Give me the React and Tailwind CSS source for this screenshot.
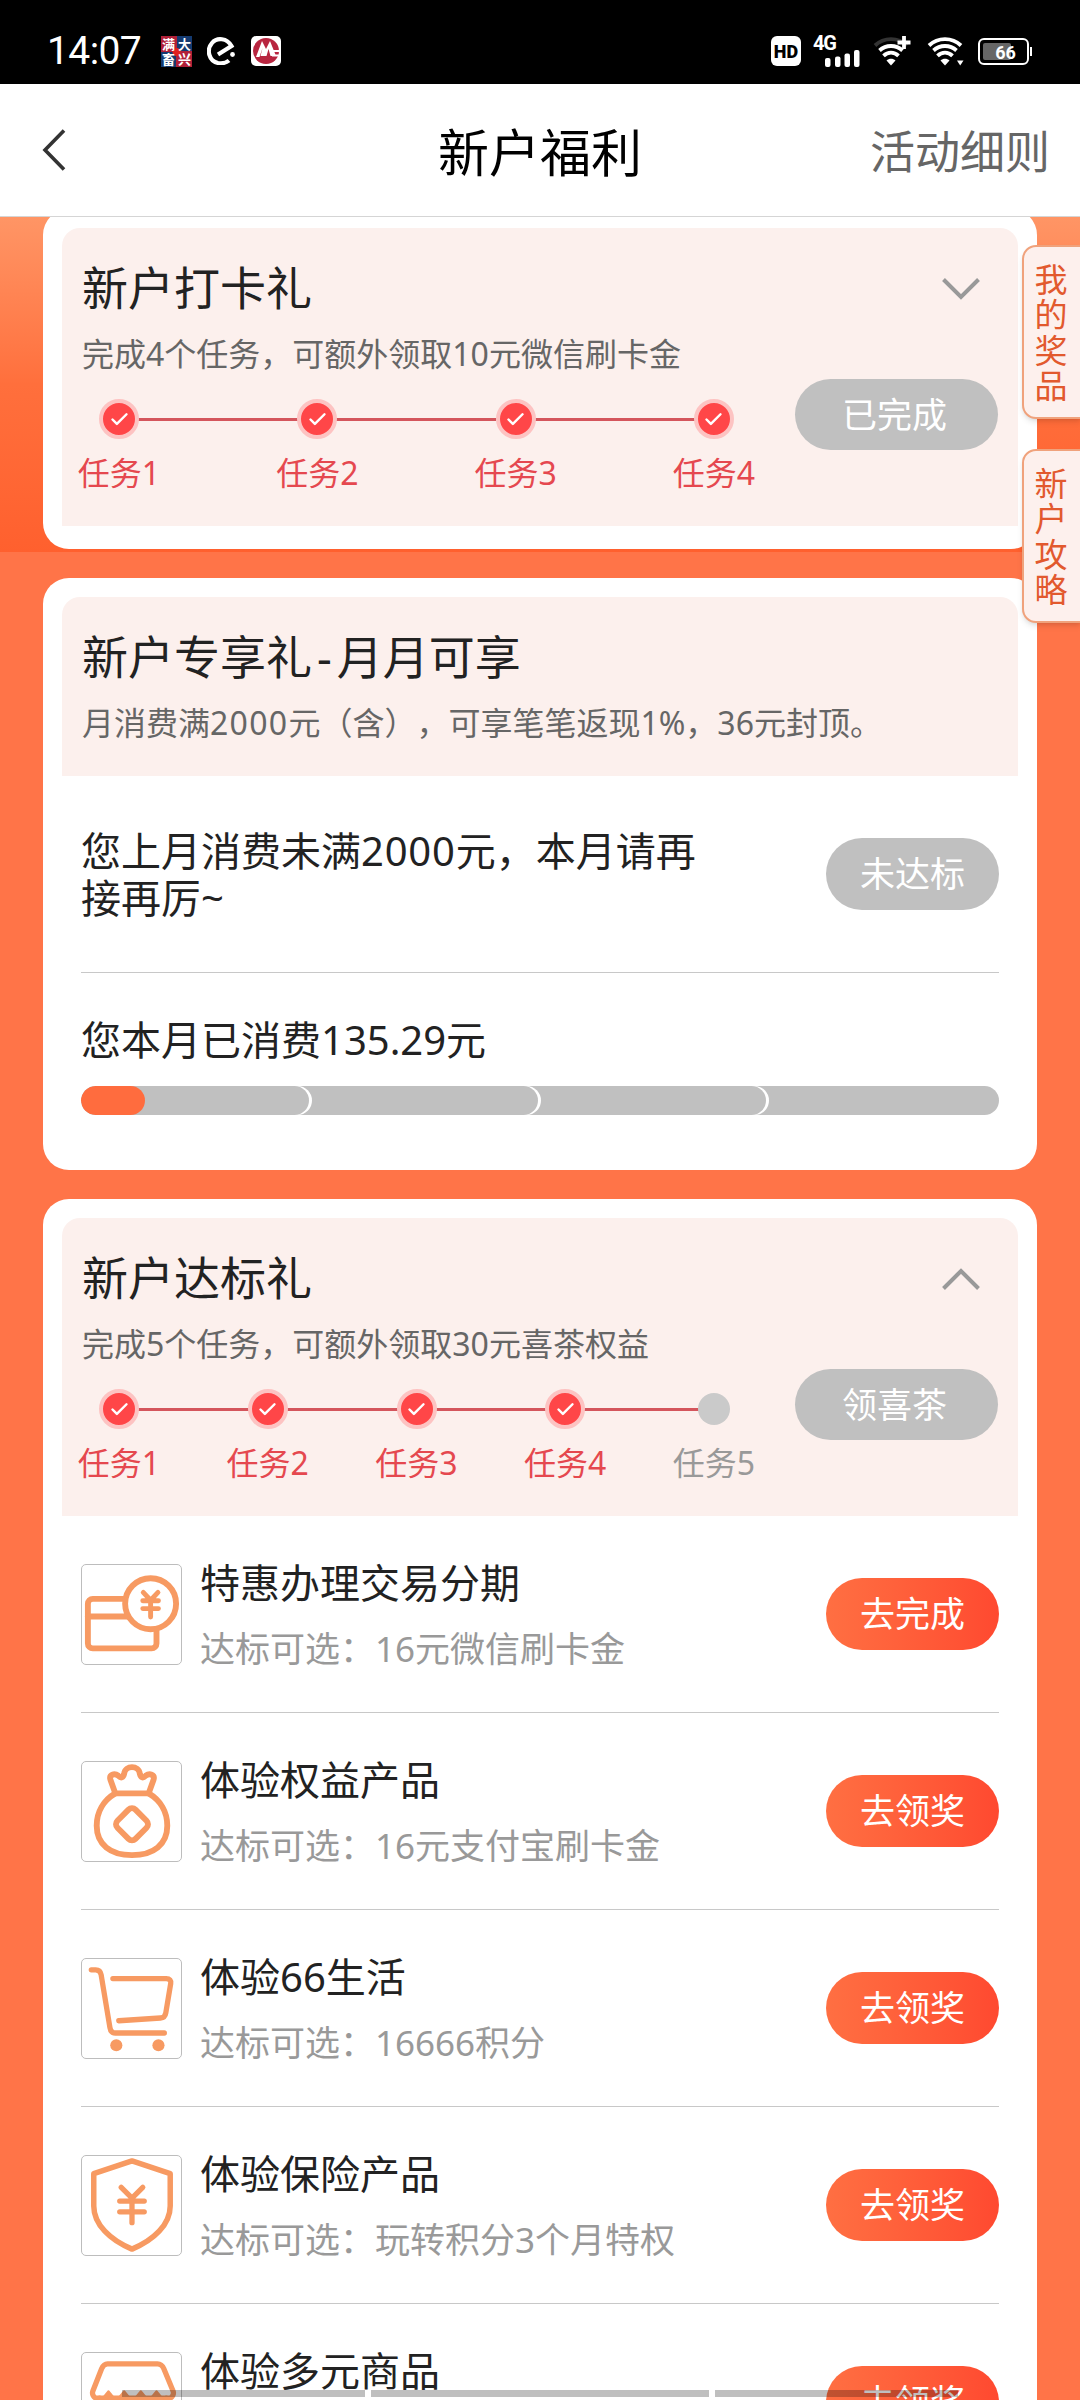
import { Check } from 'lucide-react';

const checkinSteps = [
  { label: '任务1', done: true },
  { label: '任务2', done: true },
  { label: '任务3', done: true },
  { label: '任务4', done: true }
];

const targetSteps = [...checkinSteps, { label: '任务5', done: false }];

const tasks = [
  { icon: CardIcon, title: '特惠办理交易分期', reward: '达标可选：16元微信刷卡金', action: '去完成' },
  { icon: BagIcon, title: '体验权益产品', reward: '达标可选：16元支付宝刷卡金', action: '去领奖' },
  { icon: CartIcon, title: '体验66生活', reward: '达标可选：16666积分', action: '去领奖' },
  { icon: ShieldIcon, title: '体验保险产品', reward: '达标可选：玩转积分3个月特权', action: '去领奖' },
  { icon: StoreIcon, title: '体验多元商品', action: '去领奖' }
];

function TaskSvg({ children }) {
  return (
    <svg viewBox="0 0 101 101" className="h-[99px] w-[99px]" fill="none" stroke="#f79a62" strokeWidth="6" strokeLinecap="round" strokeLinejoin="round">
      {children}
    </svg>
  );
}

function CardIcon() {
  return (
    <TaskSvg>
      <rect x="6" y="34.5" width="70" height="50.5" rx="5" />
      <path d="M6 52.5h40" />
      <circle cx="70" cy="39.5" r="26" fill="#fff" />
      <path d="M62.5 28l7.5 8 7.5-8M62 36.5h16M62 44.5h16M70 36v17" strokeWidth="5" />
    </TaskSvg>
  );
}

function BagIcon() {
  return (
    <TaskSvg>
      <path d="M34 32L29 18C27.500 13 33 11 37 14C40 17 42 16 43 12C44 3 58 3 59 12C60 16 62 17 65 14C69 11 74.500 13 73 18L68 32Z" />
      <path d="M34 32C22 39 15 51 15 65C15 84 29 95 51 95C73 95 87 84 87 65C87 51 80 39 68 32" />
      <rect x="38" y="50.500" width="26" height="26" rx="5" transform="rotate(45 51 63.5)" />
    </TaskSvg>
  );
}

function CartIcon() {
  return (
    <TaskSvg>
      <g strokeWidth="5.400">
        <path d="M9.500 11H14C17.500 11 19 13 19.500 16L28.500 70C29 73.500 30.500 75.500 34 75.500H84" />
        <path d="M31.500 20H86C89.500 20 91 22 90.500 25L85.500 55C85 58.500 83 60 80 60.200L37.500 63" />
      </g>
      <circle cx="35" cy="88" r="6.200" fill="#f79a62" stroke="none" />
      <circle cx="78" cy="88" r="6.200" fill="#f79a62" stroke="none" />
    </TaskSvg>
  );
}

function ShieldIcon() {
  return (
    <TaskSvg>
      <path d="M51 5L90 18V51C90 70 73 86 51 95C29 86 12 70 12 51V18Z" strokeWidth="5.600" />
      <path d="M40 32l11 11 11-11M38.500 46h25M38.500 57h25M51 43v25" strokeWidth="5.400" />
    </TaskSvg>
  );
}

function StoreIcon() {
  return (
    <TaskSvg>
      <path d="M11 39L20 16C21.500 12.500 23 11 26 11H77C80 11 82 12.500 83.500 16L93 39C94 42 92 46 89 46H15C12 46 10 42 11 39Z" strokeWidth="5.400" />
      <path d="M22 45l5-6 5 6zM38 45l5-6 5 6zM55 45l5-6 5 6zM71 45l5-6 5 6z" fill="#f79a62" strokeWidth="2" />
      <path d="M18 46V92H86V46" strokeWidth="5.400" />
    </TaskSvg>
  );
}

function Wifi({ plus }) {
  return (
    <svg viewBox="0 0 38 30" className="h-[30px] w-[38px]" fill="none" stroke="#fff" strokeWidth="3.800">
      <path d="M2 9.500C11 1 25 1 34 9.500" stroke={plus ? '#333' : '#fff'} />
      <path d="M6.500 14.500C13 8.500 23 8.500 29.500 14.500" />
      <path d="M10.500 19.800C15 15.500 21 15.500 25.500 19.800" />
      <path d="M13.500 24.500L18 29.500L22.500 24.500C20 22 16 22 13.500 24.500Z" fill="#fff" stroke="none" />
      {plus ? (
        <path d="M31 0V13M24.500 6.500H37.500" />
      ) : (
        <path d="M30 24.500H36.500L33.200 29.500Z" fill="#fff" stroke="none" />
      )}
    </svg>
  );
}

function StatusBar() {
  return (
    <div className="flex h-[84px] items-center bg-black pr-[48px] pl-[47px] pt-[18px] text-white">
      <span className="w-[114px] font-[Roboto] text-[39px] leading-[30px] tracking-[-0.6px]">14:07</span>
      <svg viewBox="0 0 31 31" className="h-[31px] w-[31px] overflow-visible font-['Noto_Sans_CJK_SC',sans-serif]" fill="#fff" fontSize="13" fontWeight="700">
        <rect width="31" height="31" fill="#b02038" />
        <rect x="16" width="15" height="15" fill="#143a70" />
        <rect y="16" width="15" height="15" fill="#143a70" />
        <circle cx="15.500" cy="16" r="4" fill="#e02020" />
        <text x="1" y="12.500">满</text>
        <text x="17" y="12.500">大</text>
        <text x="1" y="28">畜</text>
        <text x="17" y="28">兴</text>
      </svg>
      <svg viewBox="0 0 28 28" className="ml-[15px] h-[28px] w-[28px]" fill="none" stroke="#fff" strokeWidth="4.200">
        <path d="M11 17.500L24.500 9C20 1 10 0 5 6C-1 13 2 24 11 26C15 26.600 19 26 22 23.500" />
        <circle cx="25.500" cy="17.500" r="2.400" fill="#fff" stroke="none" />
      </svg>
      <svg viewBox="0 0 30 30" className="ml-[16px] h-[30px] w-[30px]">
        <rect width="30" height="30" rx="5" fill="#fff" />
        <circle cx="15" cy="15" r="13" fill="#b8253f" />
        <path d="M5 21L11 5L15 13L19 5L25 20H19.500L17.500 13L15.500 20H9.500L11.500 12L8.500 21Z" fill="#fff" />
        <path d="M19 15H29M21 19.500H28" stroke="#fff" strokeWidth="1.800" />
      </svg>
      <div className="ml-auto flex h-[30px] w-[30px] items-center justify-center rounded-[6px] bg-white font-[Roboto] text-[18px] font-black text-black">HD</div>
      <svg viewBox="0 0 48 32" className="ml-[12px] h-[32px] w-[48px] overflow-visible" fill="#fff">
        <text x="0" y="15" fontFamily="Roboto" fontSize="20" fontWeight="700" textLength="24">4G</text>
        <rect x="12" y="23" width="5.500" height="9" rx="2" />
        <rect x="22" y="21.500" width="5.500" height="10.500" rx="2" />
        <rect x="31.500" y="18.500" width="5.500" height="13.500" rx="2" />
        <rect x="41" y="15" width="5.500" height="17" rx="2" />
      </svg>
      <div className="ml-[12px]"><Wifi plus /></div>
      <div className="ml-[16px]"><Wifi /></div>
      <div className="ml-[13px] flex items-center">
        <div className="relative h-[27px] w-[51px] rounded-[6px] border-2 border-white p-[3px]">
          <div className="h-full w-[28px] rounded-[2px] bg-[#666]" />
          <span className="absolute inset-0 pl-[4px] text-center font-[Roboto] text-[18px] leading-[25px] font-bold">66</span>
        </div>
        <div className="ml-[1px] h-[9px] w-[2px] bg-white" />
      </div>
    </div>
  );
}

function Header() {
  return (
    <header className="relative z-10 flex h-[133px] items-center justify-between border-b border-[#d5d5d5] bg-white pr-[30px] pl-[42px]">
      <svg viewBox="0 0 24 42" className="h-[42px] w-[168px]" preserveAspectRatio="xMinYMid meet" fill="none" stroke="#333" strokeWidth="3.600">
        <path d="M22 1.500L3 21L22 40.500" />
      </svg>
      <h1 className="pt-[3px] text-[51px] leading-[60px] text-black">新户福利</h1>
      <span className="pt-[4px] text-[45px] leading-[60px] text-[#666]">活动细则</span>
    </header>
  );
}

function Steps({ steps }) {
  return (
    <div className="mt-[25px] -ml-[5px] flex w-[679px] justify-between">
      {steps.map((step, index) => (
        <div key={step.label} className="relative flex w-[84px] flex-col items-center">
          {index < steps.length - 1 && (
            <div className={steps.length === 4 ? 'absolute top-[19px] left-[61px] h-[3px] w-[160px] bg-[#d4555c]' : 'absolute top-[19px] left-[61px] h-[3px] w-[118px] bg-[#d4555c]'} />
          )}
          {step.done ? (
            <div className="relative flex h-[40px] w-[40px] items-center justify-center rounded-full border-4 border-[#fdc3c2] bg-[#ff4648]">
              <Check className="h-[21px] w-[21px] text-white" strokeWidth={2.800} />
            </div>
          ) : (
            <div className="relative my-[4px] h-[32px] w-[32px] rounded-full bg-[#cacaca]" />
          )}
          <span className={step.done ? 'mt-[15px] text-[32px] leading-[38px] text-[#e5484f]' : 'mt-[15px] text-[32px] leading-[38px] text-[#999]'}>{step.label}</span>
        </div>
      ))}
    </div>
  );
}

function StepPanel({ title, text, steps, action, open }) {
  return (
    <div className="h-[298px] rounded-t-[18px] bg-[#fcf0ed] pt-[29px] pr-[20px] pl-[20px]">
      <div className="flex items-center justify-between pr-[18px]">
        <h2 className="text-[46px] leading-[60px] text-[#222]">{title}</h2>
        <svg viewBox="0 0 38 22" className="mt-[4px] h-[22px] w-[38px]" fill="none" stroke="#999" strokeWidth="4">
          <path d={open ? 'M1.500 20.500L19 3L36.500 20.500' : 'M1.500 1.500L19 19L36.500 1.500'} />
        </svg>
      </div>
      <div className="flex justify-between">
        <div>
          <p className="mt-[17px] text-[32px] leading-[40px] text-[#666]">{text}</p>
          <Steps steps={steps} />
        </div>
        <button className="mt-[62px] h-[71px] w-[203px] shrink-0 rounded-full bg-[#c0c0c0] pr-[4px] text-[35px] leading-[71px] text-white">{action}</button>
      </div>
    </div>
  );
}

function SpendProgress() {
  return (
    <div className="relative mt-[21px] flex h-[29px] overflow-hidden rounded-full bg-[#c0c0c0] pr-[5px]">
      {[0, 1, 2].map((segment) => (
        <div key={segment} className="w-1/4 rounded-r-full shadow-[3px_0_0_#fff]" />
      ))}
      <div className="absolute inset-y-0 left-0 w-[64px] rounded-full bg-[#ff6c3e]" />
    </div>
  );
}

function SideTab({ text }) {
  return (
    <div className="flex h-[174px] w-[60px] items-center justify-center rounded-l-[14px] border-2 border-[#f0a27c] bg-[#fdf0ed] pt-[3px] pr-[6px] text-[33px] leading-[50px] tracking-[2.3px] text-[#e2592e] shadow-md [writing-mode:vertical-rl]">
      {text}
    </div>
  );
}

export default function App() {
  return (
    <div className="relative h-[2400px] w-[1080px] overflow-hidden bg-[#ff7448] font-['Noto_Sans','Noto_Sans_CJK_SC',sans-serif] [text-spacing-trim:space-all]">
      <StatusBar />
      <Header />

      <div className="absolute top-[217px] left-0 h-[335px] w-full bg-linear-to-b from-[#ff9565] via-[#ff6f3c] to-[#ff602e]" />

      <div className="absolute top-[245px] right-[-2px] z-20 flex flex-col gap-[30px]">
        <SideTab text="我的奖品" />
        <SideTab text="新户攻略" />
      </div>

      <main className="relative -mt-[8px] flex flex-col gap-[29px] px-[43px]">
        <section className="h-[340px] rounded-[26px] bg-white p-[19px]">
          <StepPanel title="新户打卡礼" text="完成4个任务，可额外领取10元微信刷卡金" steps={checkinSteps} action="已完成" />
        </section>

        <section className="h-[592px] rounded-[26px] bg-white p-[19px]">
          <div className="h-[179px] rounded-t-[18px] bg-[#fcf0ed] pt-[29px] pl-[20px]">
            <h2 className="text-[46px] leading-[60px] text-[#222]">新户专享礼<span className="px-[5px]">-</span>月月可享</h2>
            <p className="mt-[17px] text-[32px] leading-[40px] text-[#666]">月消费满<span className="tracking-[1.3px]">2000</span>元（含），可享笔笔返现1%，36元封顶。</p>
          </div>
          <div className="px-[19px]">
            <div className="flex h-[197px] items-center justify-between border-b border-[#c8c8c8]">
              <p className="w-[630px] text-[40px] leading-[47px] text-[#222]">您上月消费未满<span className="tracking-[0.8px]">2000</span>元，本月请再接再厉~</p>
              <button className="h-[72px] w-[173px] rounded-full bg-[#c0c0c0] text-[35px] leading-[72px] text-white">未达标</button>
            </div>
            <p className="mt-[42px] text-[40px] leading-[50px] text-[#222]">您本月已消费135.29元</p>
            <SpendProgress />
          </div>
        </section>

        <section className="rounded-[26px] bg-white p-[19px]">
          <StepPanel title="新户达标礼" text="完成5个任务，可额外领取30元喜茶权益" steps={targetSteps} action="领喜茶" open />
          <div className="px-[19px]">
            {tasks.map((task) => {
              const Icon = task.icon;
              return (
                <div key={task.title} className="flex h-[197px] items-center border-b border-[#c8c8c8]">
                  <div className="h-[101px] w-[101px] rounded-[5px] border border-[#bdbdbd]">
                    <Icon />
                  </div>
                  <div className="ml-[18px] h-[113px] flex-1">
                    <h3 className="text-[40px] leading-[50px] text-[#222]">{task.title}</h3>
                    {task.reward && <p className="mt-[16px] text-[35px] leading-[50px] text-[#999]">{task.reward}</p>}
                  </div>
                  <button className="h-[72px] w-[173px] rounded-full bg-linear-to-r from-[#ff6f42] to-[#ff4930] text-[35px] leading-[72px] text-white">{task.action}</button>
                </div>
              );
            })}
          </div>
        </section>
      </main>

      <div className="absolute bottom-[3px] left-[122px] z-30 flex gap-[6px]">
        <div className="h-[7px] w-[243px] bg-black/25" />
        <div className="h-[7px] w-[338px] bg-black/25" />
        <div className="h-[7px] w-[243px] bg-black/25" />
      </div>
    </div>
  );
}
